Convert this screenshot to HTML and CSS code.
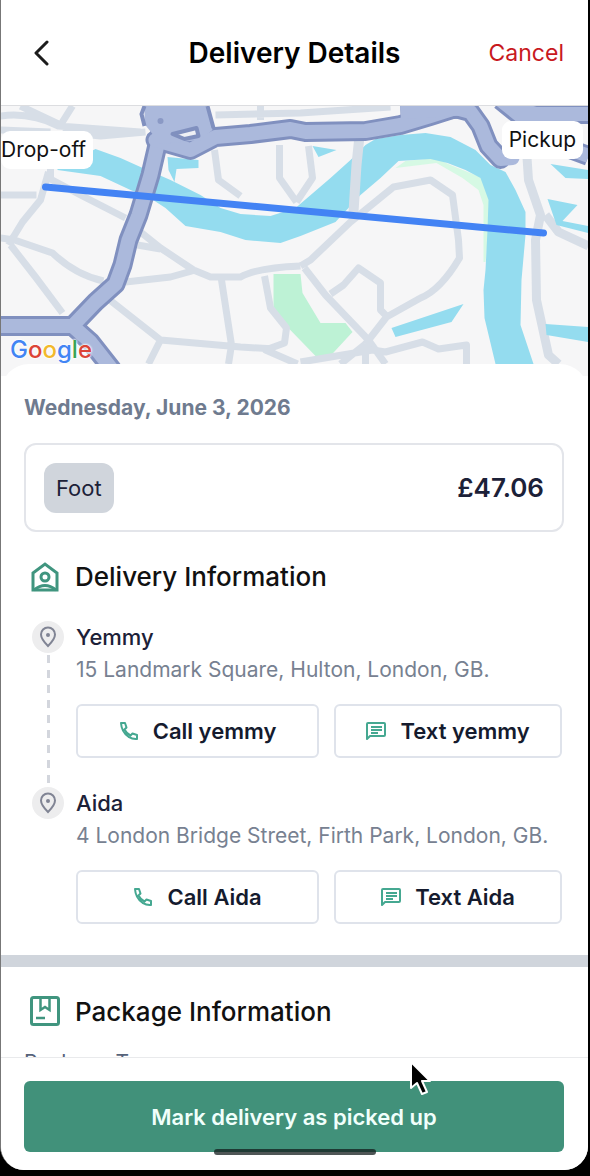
FILE: index.html
```html
<!DOCTYPE html>
<html lang="en">
<head>
    <meta charset="utf-8">
    <meta name="viewport" content="width=device-width, initial-scale=1.0">
    <title>Delivery Details</title>
    <link rel="stylesheet" href="styles.css">
</head>
<body>
    <div class="screen">
        <header class="topbar">
            <button class="back" type="button" aria-label="Back">
                <svg width="16" height="26" viewBox="0 0 16 26"><path d="M14 2L3 13L14 24" fill="none" stroke="#1c1c1c" stroke-width="3" stroke-linecap="round" stroke-linejoin="round"/></svg>
            </button>
            <h1>Delivery Details</h1>
            <button class="cancel" type="button">Cancel</button>
        </header>

        <main class="content">
            <div class="map">
                <svg class="map-art" viewBox="0 106 588 270" preserveAspectRatio="xMidYMid slice" aria-hidden="true">
                    <rect x="0" y="106" width="590" height="270" fill="#f6f6f7"/>
                    <!-- parks -->
                    <path d="M273 274H300L302 293L320 323H345L352 332L328 358L316 357L285 325L273 310Z" fill="#bdf2d5"/>
                    <path d="M395 168L405 161L435 158L450 165L482 178L491 205L485 262L483 262V205L478 190L462 178L436 163Z" fill="#d6f9e4"/>
                    <!-- small roads -->
                    <g fill="none" stroke="#d7dee7" stroke-width="7" stroke-linejoin="round">
                        <path d="M0 116Q30 112 58 126L140 132M0 130L50 132M20 106L60 125L72 106M62 132L100 136L145 132M0 150L50 165L50 180"/>
                        <path d="M48 172L40 200L22 222L8 245M0 195L36 195M48 178L80 195L125 218M0 238L14 240L52 253Q75 275 103 281M10 245L35 277L62 313"/>
                        <path d="M135 228L160 248L193 270L210 277H240Q255 268 300 266M125 282L170 277L195 270M137 245L160 249M108 299L160 340L240 347L275 349M160 340L148 364M221 280L231 345L228 364M264 276L270 308L286 328L284 343L265 350L297 364"/>
                        <path d="M214 150L218 180L240 196M279 145V178L296 202M260 106V120M215 115L300 113L390 107M308 146L312 178L296 202"/>
                        <path d="M300 266L310 260L350 222L393 187L430 180L452 195L458 240L459 258Q440 290 420 298L386 317L365 344M304 268L325 295L368 340L385 364M330 294L343 285L358 268L380 283V310L386 316"/>
                        <path d="M365 344L340 364M300 362L372 350L385 352L422 342L438 349L466 345V364M365 344V364"/>
                        <path d="M526 150L528 180L540 215L535 240L536 300L548 355L558 364M545 215L558 232L588 246" stroke-width="9"/>
                    </g>
                    <!-- river -->
                    <g fill="#94dcef">
                        <path d="M57 168L95 149L120 158L140 167L170 180L200 195L220 208L240 214L270 216L295 208L330 178L350 160L365 145L375 139L400 135L425 133L450 137L475 150L490 165L505 172L515 190L525 212V235L521 280L520 325L533 364H495L484 318L483 290L485 270L487 230L488 200L480 178L465 170L447 163L430 159L398 161L380 178L360 195L335 222L300 236L280 243L245 240L220 232L185 226L165 208L148 197L130 190L100 176L57 170Z"/>
                        <path d="M167 157L198 160V168L176 169L174 182L168 170ZM312 146L336 150L318 157ZM550 164L588 170V179L565 178ZM547 199L577 205L562 221L588 226V233L556 225ZM545 324L588 327V342L546 335ZM391 328L463 304L451 322L395 337Z"/>
                    </g>
                    <path d="M359 136L356 165L353 212" fill="none" stroke="#d7dee7" stroke-width="10"/>
                    <!-- main roads: dark casing first, light fill over it -->
                    <g fill="none" stroke="#8090bf" stroke-width="20" stroke-linejoin="round">
                        <path d="M160 132L150 175L138 215L128 240L122 265L115 284L95 302L72 326M0 326H72L90 342L112 370"/>
                        <path d="M155 140L190 150L215 137L250 134L290 129L305 132L365 131L400 125L430 116L455 108L470 112L480 126L488 146L500 159" stroke-linecap="round"/>
                        <path d="M400 112L470 108M500 100L525 120L545 140L588 156M510 106L535 114H588"/>
                        <path d="M150 118L200 116L206 136"/>
                    </g>
                    <g fill="none" stroke="#abb9dc" stroke-width="14" stroke-linejoin="round">
                        <path d="M160 132L150 175L138 215L128 240L122 265L115 284L95 302L72 326M0 326H72L90 342L112 370"/>
                        <path d="M155 140L190 150L215 137L250 134L290 129L305 132L365 131L400 125L430 116L455 108L470 112L480 126L488 146L500 159L512 158" stroke-linecap="round"/>
                        <path d="M400 112L470 108M500 100L525 120L545 140L588 156M510 106L535 114H588"/>
                    </g>
                    <path d="M144 106H206L212 130L200 140L160 144L144 124Z" fill="#abb9dc"/>
                    <path d="M144 106L141 114L144 126M207 106L213 128" fill="none" stroke="#8090bf" stroke-width="4"/>
                    <path d="M172 134L196 128L198 136L184 139Z" fill="#eef0f5" stroke="#8090bf" stroke-width="4" stroke-linejoin="round"/>
                    <circle cx="160" cy="121" r="3" fill="#8a99c5"/>
                    <!-- route -->
                    <path d="M45 187L543 233" fill="none" stroke="#4383f4" stroke-width="7" stroke-linecap="round"/>
                </svg>
                <span class="pin-label dropoff">Drop-off</span>
                <span class="pin-label pickup">Pickup</span>
                <span class="google"><span class="g-blue">G</span><span class="g-red">o</span><span class="g-yellow">o</span><span class="g-blue">g</span><span class="g-green">l</span><span class="g-red">e</span></span>
            </div>

            <section class="sheet">
                <p class="date">Wednesday, June 3, 2026</p>
                <div class="fare">
                    <span class="mode">Foot</span>
                    <span class="price">£47.06</span>
                </div>

                <h2 class="section-title">
                    <svg width="30" height="32" viewBox="0 0 30 32" fill="none" stroke="#40957f" stroke-width="3"><path d="M3 12L15 3L27 12V29H3Z"/><circle cx="15" cy="16" r="4"/><path d="M4 29Q15 20 26 29"/></svg>
                    Delivery Information
                </h2>

                <ol class="stops">
                    <li class="stop">
                        <div class="rail">
                            <span class="marker"><svg width="18" height="22" viewBox="0 0 18 22"><path d="M9 20Q2 13 2 8.500A7 7 0 0 1 16 8.500Q16 13 9 20Z" fill="none" stroke="#808494" stroke-width="2"/><circle cx="9" cy="9" r="2" fill="#808494"/></svg></span>
                            <span class="dashes"></span>
                        </div>
                        <div class="stop-body">
                            <h3>Yemmy</h3>
                            <p class="address">15 Landmark Square, Hulton, London, GB.</p>
                            <div class="actions">
                                <button class="action" type="button">
                                    <svg width="20" height="20" viewBox="0 0 20 20"><path d="M2 2H6L7.500 6.500L5.500 8.500Q7.500 12.500 11.500 14.500L13.500 12.500L18 14V18Q14 18.500 9.500 15.800Q2.500 11 2 2Z" fill="none" stroke="#45a891" stroke-width="2" stroke-linejoin="round"/></svg>
                                    Call yemmy
                                </button>
                                <button class="action" type="button">
                                    <svg width="20" height="20" viewBox="0 0 20 20"><path d="M1 18V3Q1 2 2 2H18Q19 2 19 3V14Q19 15 18 15H4Z" fill="none" stroke="#45a891" stroke-width="2" stroke-linejoin="round"/><path d="M5 6H16M5 9H16M5 12H12" stroke="#45a891" stroke-width="2"/></svg>
                                    Text yemmy
                                </button>
                            </div>
                        </div>
                    </li>
                    <li class="stop">
                        <div class="rail">
                            <span class="marker"><svg width="18" height="22" viewBox="0 0 18 22"><path d="M9 20Q2 13 2 8.500A7 7 0 0 1 16 8.500Q16 13 9 20Z" fill="none" stroke="#808494" stroke-width="2"/><circle cx="9" cy="9" r="2" fill="#808494"/></svg></span>
                        </div>
                        <div class="stop-body">
                            <h3>Aida</h3>
                            <p class="address">4 London Bridge Street, Firth Park, London, GB.</p>
                            <div class="actions">
                                <button class="action" type="button">
                                    <svg width="20" height="20" viewBox="0 0 20 20"><path d="M2 2H6L7.500 6.500L5.500 8.500Q7.500 12.500 11.500 14.500L13.500 12.500L18 14V18Q14 18.500 9.500 15.800Q2.500 11 2 2Z" fill="none" stroke="#45a891" stroke-width="2" stroke-linejoin="round"/></svg>
                                    Call Aida
                                </button>
                                <button class="action" type="button">
                                    <svg width="20" height="20" viewBox="0 0 20 20"><path d="M1 18V3Q1 2 2 2H18Q19 2 19 3V14Q19 15 18 15H4Z" fill="none" stroke="#45a891" stroke-width="2" stroke-linejoin="round"/><path d="M5 6H16M5 9H16M5 12H12" stroke="#45a891" stroke-width="2"/></svg>
                                    Text Aida
                                </button>
                            </div>
                        </div>
                    </li>
                </ol>
            </section>

            <section class="package">
                <h2 class="section-title">
                    <svg width="30" height="32" viewBox="0 0 30 32" fill="none" stroke="#40957f" stroke-width="3"><rect x="1.500" y="1.500" width="27" height="27" rx="2"/><path d="M10.500 2V14L15 11L19.500 14V2M6 22H15" stroke-width="2.500"/></svg>
                    Package Information
                </h2>
                <p class="field">Package Type</p>
            </section>
        </main>

        <footer class="bottom">
            <button class="primary" type="button">Mark delivery as picked up</button>
            <span class="home-bar"></span>
        </footer>
        <svg class="cursor" width="26" height="40" viewBox="0 0 26 40" aria-hidden="true"><path d="M3 3V29L9 24L14 35L19 33L14 22H22Z" fill="#000" stroke="#fff" stroke-width="2" stroke-linejoin="round"/></svg>
    </div>
</body>
</html>
```
FILE: styles.css
```css
* {
    box-sizing: border-box;
}

body {
    margin: 0;
    background-color: #000;
    font-family: Inter, "Liberation Sans", sans-serif;
    color: #1c2138;
}

h1, h2, h3, p, ol {
    margin: 0;
    padding: 0;
}

button {
    font-family: inherit;
    cursor: pointer;
}

svg {
    display: block;
    flex-shrink: 0;
}

.screen {
    position: relative;
    display: flex;
    flex-direction: column;
    height: calc(100vh - 6px);
    margin-right: 2px;
    border-left: 1px solid #777;
    border-radius: 0 0 24px 24px;
    background-color: #fff;
    overflow: hidden;
}

.topbar {
    display: grid;
    grid-template-columns: 1fr auto 1fr;
    align-items: center;
    height: 106px;
    padding: 0 24px;
    border-bottom: 1px solid #dcdde0;
    flex-shrink: 0;
}

.topbar h1 {
    font-size: 28px;
    font-weight: 600;
    color: #000;
}

.back, .cancel {
    padding: 0;
    border: none;
    background: none;
}

.back {
    justify-self: start;
    padding-left: 8px;
}

.cancel {
    justify-self: end;
    font-size: 23px;
    color: #c8191e;
}

.content {
    flex: 1;
    min-height: 0;
    overflow: hidden;
}

.map {
    position: relative;
    height: 270px;
}

.map-art {
    width: 100%;
    height: 100%;
}

.pin-label {
    position: absolute;
    padding: 0 7px;
    border-radius: 9px;
    background-color: #fff;
    font-size: 21px;
    line-height: 38px;
    color: #111;
}

.dropoff {
    top: 25px;
    left: 0;
    padding-left: 0;
}

.pickup {
    top: 15px;
    right: 5px;
}

.google {
    position: absolute;
    left: 9px;
    bottom: 11px;
    font-size: 24px;
    font-weight: 500;
    line-height: 30px;
    text-shadow: 0 0 2px #fff, 0 0 2px #fff, 0 0 3px #fff;
}

.g-blue { color: #4285f4; }
.g-red { color: #dc4437; }
.g-yellow { color: #f2b92c; }
.g-green { color: #38a454; }

.sheet {
    position: relative;
    margin-top: -12px;
    padding: 28px 24px 31px 23px;
    border-radius: 28px 28px 0 0;
    background-color: #fff;
}

.date {
    font-size: 21px;
    font-weight: 700;
    line-height: 32px;
    color: #6f7b8f;
}

.fare {
    display: flex;
    align-items: center;
    justify-content: space-between;
    height: 89px;
    margin-top: 19px;
    padding: 0 18px;
    border: 2px solid #e3e5ea;
    border-radius: 12px;
}

.mode {
    padding: 0 12px;
    border-radius: 12px;
    background-color: #d0d5dc;
    font-size: 22px;
    line-height: 50px;
}

.price {
    font-size: 26px;
    font-weight: 600;
}

.section-title {
    display: flex;
    align-items: center;
    gap: 15px;
    padding-left: 6px;
    font-size: 26px;
    font-weight: 500;
    line-height: 32px;
    color: #111;
}

.fare + .section-title {
    margin-top: 29px;
}

.stops {
    margin-top: 28px;
    list-style: none;
}

.stop {
    display: flex;
    gap: 12px;
    padding-left: 8px;
}

.rail {
    display: flex;
    flex-direction: column;
    align-items: center;
    width: 32px;
}

.marker {
    display: flex;
    align-items: center;
    justify-content: center;
    width: 32px;
    height: 32px;
    border-radius: 50%;
    background-color: #ededee;
}

.dashes {
    flex: 1;
    width: 3px;
    margin: 2px 0;
    background-image: repeating-linear-gradient(#d3d6dd 0 8px, transparent 8px 15px);
}

.stop-body {
    flex: 1;
}

.stop + .stop {
    margin-top: 0;
}

.stop .stop-body {
    padding-bottom: 29px;
}

.stop + .stop .stop-body {
    padding-bottom: 0;
}

.stop h3 {
    font-size: 22px;
    font-weight: 500;
    line-height: 32px;
}

.address {
    font-size: 21px;
    line-height: 34px;
    color: #778191;
}

.actions {
    display: grid;
    grid-template-columns: 16fr 15fr;
    gap: 15px;
    margin: 17px 2px 0 0;
}

.action {
    display: flex;
    align-items: center;
    justify-content: center;
    gap: 14px;
    height: 54px;
    padding: 0;
    border: 2px solid #dfe3eb;
    border-radius: 6px;
    background-color: #fff;
    font-size: 22px;
    font-weight: 600;
    color: #151b2e;
}

.package {
    padding: 29px 24px 0 23px;
    border-top: 12px solid #d0d5dc;
}

.field {
    margin-top: 19px;
    font-size: 21px;
    line-height: 32px;
    color: #56637a;
}

.bottom {
    position: relative;
    padding: 23px 24px 18px 23px;
    border-top: 1px solid #e9eaec;
    background-color: #fff;
    flex-shrink: 0;
}

.primary {
    display: block;
    width: 100%;
    height: 71px;
    border: none;
    border-radius: 6px;
    background-color: #41917a;
    font-size: 22px;
    font-weight: 600;
    color: #f0fffb;
}

.home-bar {
    position: absolute;
    left: 50%;
    bottom: 15px;
    width: 162px;
    height: 6px;
    margin-left: -81px;
    border-radius: 3px;
    background-color: rgba(20, 30, 30, 0.75);
}

.cursor {
    position: absolute;
    right: 154px;
    bottom: 71px;
}
```
